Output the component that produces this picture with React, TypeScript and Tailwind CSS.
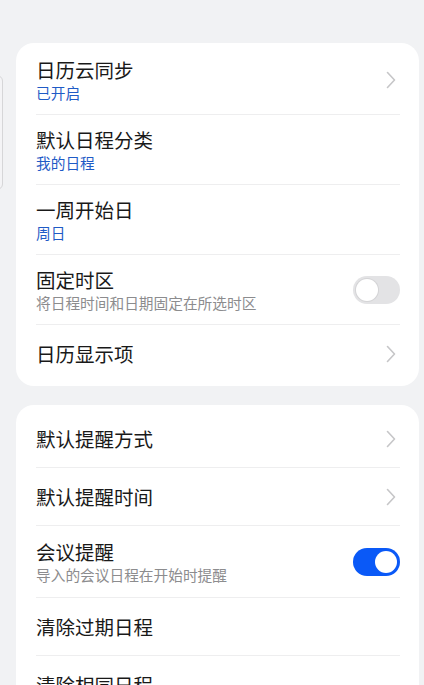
import React from "react";

type Row = {
  title: string;
  sub?: string;
  subTone?: "blue" | "gray";
  right: "chevron" | "toggle-off" | "toggle-on" | "none";
  tall?: boolean;
};

const GROUP_ONE: Row[] = [
  { title: "日历云同步", sub: "已开启", subTone: "blue", right: "chevron" },
  { title: "默认日程分类", sub: "我的日程", subTone: "blue", right: "none" },
  { title: "一周开始日", sub: "周日", subTone: "blue", right: "none" },
  {
    title: "固定时区",
    sub: "将日程时间和日期固定在所选时区",
    subTone: "gray",
    right: "toggle-off",
  },
  { title: "日历显示项", right: "chevron" },
];

const GROUP_TWO: Row[] = [
  { title: "默认提醒方式", right: "chevron" },
  { title: "默认提醒时间", right: "chevron" },
  {
    title: "会议提醒",
    sub: "导入的会议日程在开始时提醒",
    subTone: "gray",
    right: "toggle-on",
    tall: true,
  },
  { title: "清除过期日程", right: "none" },
  { title: "清除相同日程", right: "none" },
];

const Chevron = () => (
  <svg width="10" height="18" viewBox="0 0 10 18" fill="none">
    <path
      d="M1.5 1.5 L8.5 9 L1.5 16.5"
      stroke="#c6c6c8"
      strokeWidth="1.6"
      strokeLinecap="round"
      strokeLinejoin="round"
    />
  </svg>
);

const Toggle = ({ on }: { on: boolean }) => (
  <div
    className={`w-[47px] h-[28px] rounded-full flex items-center px-[3px] ${
      on ? "bg-[#0a59f7] justify-end" : "bg-[#e3e3e5] justify-start"
    }`}
  >
    <div
      className={`w-[22px] h-[22px] rounded-full bg-white ${
        on ? "" : "shadow-[0_0_0_1px_#d4d4d6]"
      }`}
    />
  </div>
);

const SettingRow = ({ row, last }: { row: Row; last: boolean }) => (
  <div
    className={`flex items-center relative ${
      row.tall ? "h-[72px]" : row.sub ? "h-[70px]" : "h-[58px]"
    }`}
  >
    <div className="flex-1 flex flex-col justify-center">
      <div className="text-[19.5px] leading-[26px] text-[#191919]">{row.title}</div>
      {row.sub && (
        <div
          className={`text-[14.7px] leading-[20px] ${
            row.subTone === "blue" ? "text-[#1f5bc6]" : "text-[#8c8c8e]"
          }`}
        >
          {row.sub}
        </div>
      )}
    </div>
    {row.right === "chevron" && (
      <div className="mr-[4px]">
        <Chevron />
      </div>
    )}
    {row.right === "toggle-off" && <Toggle on={false} />}
    {row.right === "toggle-on" && <Toggle on={true} />}
    {!last && <div className="absolute left-0 right-0 bottom-0 h-px bg-[#eeeeef]" />}
  </div>
);

export default function App() {
  return (
    <div
      className="min-h-[685px] w-[424px] bg-[#f1f2f4] overflow-hidden relative"
      style={{ fontFamily: '"Noto Sans CJK SC", "Noto Sans", sans-serif' }}
    >
      {/* edge of a panel peeking in from the left */}
      <div className="absolute left-[-12px] top-[75px] w-[15px] h-[115px] rounded-[6px] border border-[#d6d6d8] bg-[#f4f4f6]" />

      <div className="pt-[43px] pl-[16px] pr-[5px] flex flex-col gap-[19px]">
        <div className="bg-white rounded-[18px] pl-[20px] pr-[19px] pt-[2px] pb-[3px]">
          {GROUP_ONE.map((row, i) => (
            <SettingRow key={row.title} row={row} last={i === GROUP_ONE.length - 1} />
          ))}
        </div>
        <div className="bg-white rounded-[18px] pl-[20px] pr-[19px] pt-[5px] pb-[3px]">
          {GROUP_TWO.map((row, i) => (
            <SettingRow key={row.title} row={row} last={i === GROUP_TWO.length - 1} />
          ))}
        </div>
      </div>
    </div>
  );
}
